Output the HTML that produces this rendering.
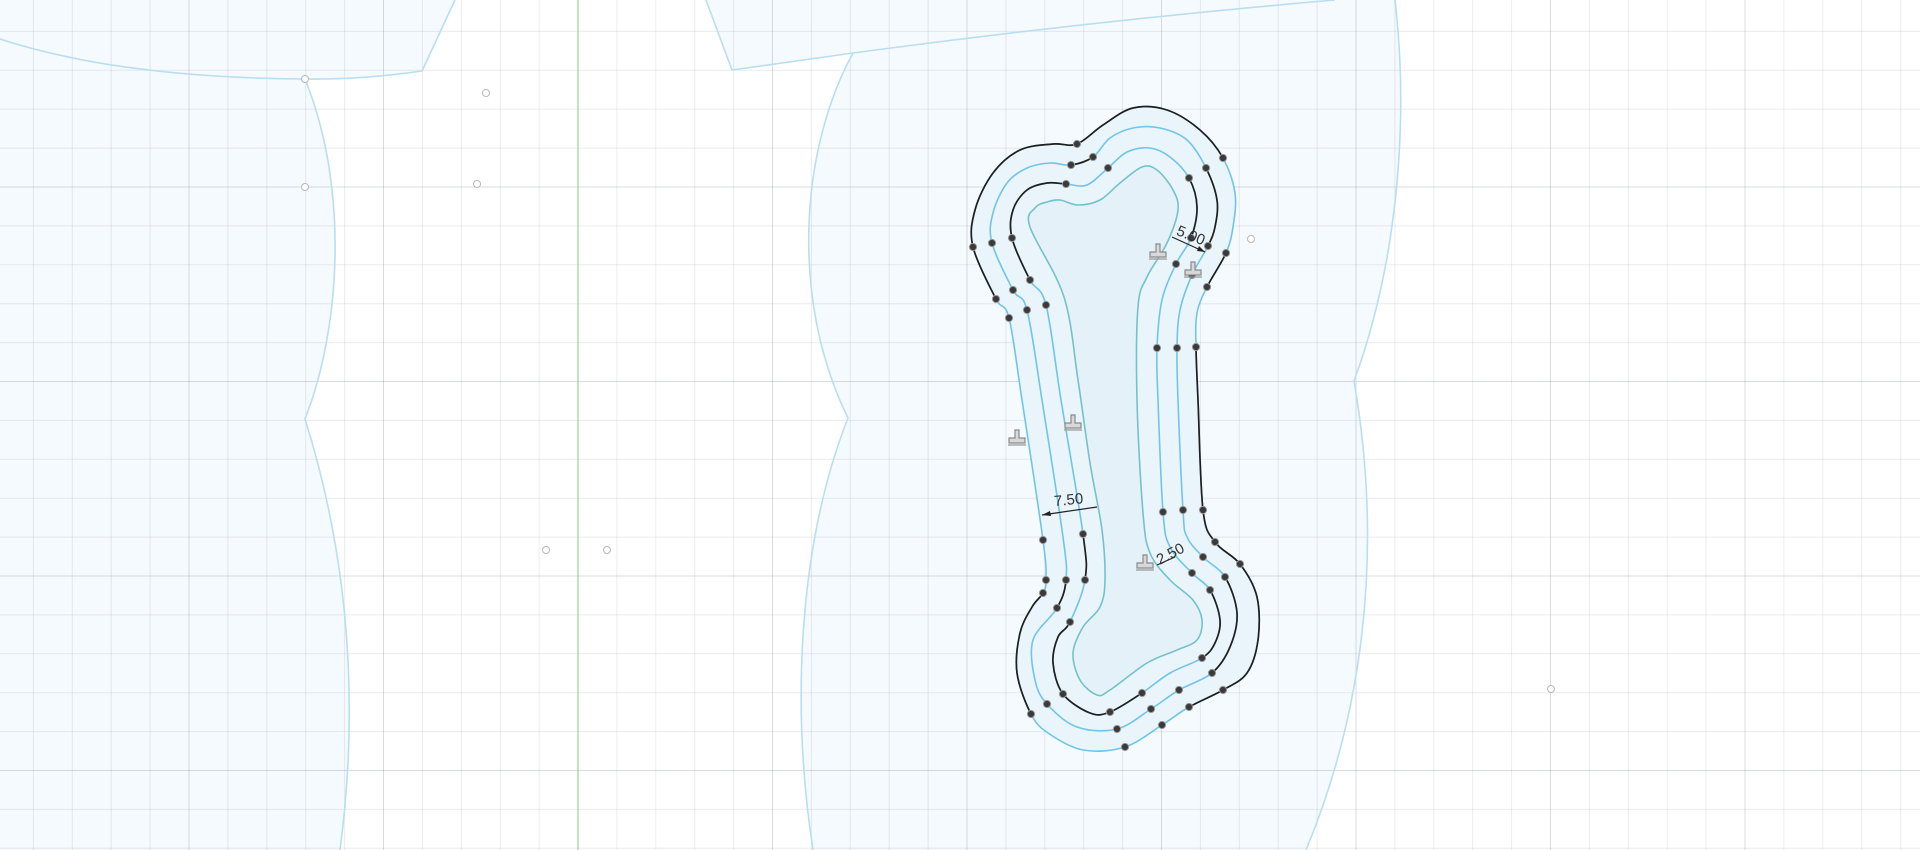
<!DOCTYPE html>
<html><head><meta charset="utf-8"><style>
html,body{margin:0;padding:0;background:#fff;width:1920px;height:850px;overflow:hidden}
svg{display:block}
text{font-family:"Liberation Sans",sans-serif}
</style></head><body>
<svg id="s" width="1920" height="850" viewBox="0 0 1920 850" xmlns="http://www.w3.org/2000/svg">
<g id="fills">
<path d="M0,0 L455,0 L422,71 Q360,80 305,79 Q120,78 0,39 Z" fill="#f5fafe"/>
<path d="M0,39 L0,850 L340,850 C352,760 362,600 305,419 C340,330 350,190 305,79 Q120,78 0,39 Z" fill="#f5fafe"/>
<path d="M706,0 L732,70 Q790,62 853,53 C800,150 790,300 848,418 C800,540 790,700 813,850 L1306,850 C1360,720 1385,560 1354,381 C1395,270 1410,130 1395,0 Z" fill="#f5fafe"/>
</g>
<g id="grid"></g>
<line x1="578" y1="0" x2="578" y2="850" stroke="#7fd07f" stroke-width="1"/>
<g fill="none" stroke="#b9def2" stroke-width="1.6">
<path d="M0,39 Q120,78 305,79 Q360,80 422,71 L455,0"/>
<path d="M305,79 C350,190 340,330 305,419 C362,600 352,760 340,850"/>
<path d="M706,0 L732,70 Q790,62 853,53 Q1100,20 1335,0"/>
<path d="M853,53 C800,150 790,300 848,418 C800,540 790,700 813,850"/>
<path d="M1395,0 C1410,130 1395,270 1354,381 C1385,560 1360,720 1306,850"/>
</g>
<g id="bone"></g>
<g fill="#fff" stroke="#b8b8b8" stroke-width="1">
<circle cx="305" cy="79" r="3.5"/><circle cx="305" cy="187" r="3.5"/>
<circle cx="486" cy="93" r="3.5"/><circle cx="477" cy="184" r="3.5"/>
<circle cx="546" cy="550" r="3.5"/><circle cx="607" cy="550" r="3.5"/>
<circle cx="1251" cy="239" r="3.5"/><circle cx="1551" cy="689" r="3.5"/>
</g>
<g id="dims" fill="#333" font-size="15">
<line x1="1172" y1="237" x2="1205" y2="252" stroke="#222" stroke-width="1.2"/>
<path d="M1205,252 l-8,-1 l2,-5 z" fill="#222"/>
<text x="1176" y="240" transform="rotate(22 1190 236)">5.00</text>
<line x1="1042" y1="515" x2="1097" y2="507" stroke="#222" stroke-width="1.2"/>
<path d="M1042,515 l8,-4 l1,5 z" fill="#222"/>
<text x="1054" y="505" transform="rotate(-6 1066 500)">7.50</text>
<line x1="1157" y1="565" x2="1175" y2="557" stroke="#222" stroke-width="1.2"/>
<text x="1156" y="560" transform="rotate(-28 1168 555)">2.50</text>
</g>
<g id="icons"></g>
</svg>
<script>
var NS="http://www.w3.org/2000/svg";
function el(t,a,p){var e=document.createElementNS(NS,t);for(var k in a)e.setAttribute(k,a[k]);p.appendChild(e);return e;}
var g=document.getElementById('grid');
for(var k=-15;k<=35;k++){var x=578+38.9*k;if(x<0||x>1920)continue;var maj=(k%5==0);
el('line',{x1:x,y1:0,x2:x,y2:850,stroke:maj?'rgba(110,120,130,0.26)':'rgba(110,120,130,0.14)','stroke-width':1},g);}
for(var k=-5;k<=20;k++){var y=187+38.9*k;if(y<0||y>850)continue;var maj=(k%5==0);
el('line',{x1:0,y1:y,x2:1920,y2:y,stroke:maj?'rgba(110,120,130,0.26)':'rgba(110,120,130,0.14)','stroke-width':1},g);}
function seg(P,i,n){var p0=P[(i-1+n)%n],p1=P[i%n],p2=P[(i+1)%n],p3=P[(i+2)%n];
return ' C'+(p1[0]+(p2[0]-p0[0])/6).toFixed(1)+','+(p1[1]+(p2[1]-p0[1])/6).toFixed(1)+' '+(p2[0]-(p3[0]-p1[0])/6).toFixed(1)+','+(p2[1]-(p3[1]-p1[1])/6).toFixed(1)+' '+p2[0]+','+p2[1];}
function closed(P){var n=P.length,d='M'+P[0][0]+','+P[0][1];for(var i=0;i<n;i++)d+=seg(P,i,n);return d+'Z';}
function part(P,a,b){var n=P.length,d='M'+P[a][0]+','+P[a][1];for(var i=a;i<b;i++)d+=seg(P,i,n);return d;}
var T=[[1064,297],[1030,227],[1035,208],[1047,202],[1060,200],[1078,205],[1100,200],[1120,183],[1142,167],[1157,170],[1173,190],[1178,210],[1167,243],[1147,277],[1138,307],[1137,400],[1143,513],[1150,553],[1170,580],[1193,600],[1202,620],[1197,640],[1177,650],[1147,663],[1110,690],[1097,695],[1080,680],[1073,653],[1083,627],[1100,607],[1105,580],[1102,530],[1090,463],[1078,380]];
var C2=[[1046,305],[1030,280],[1012,238],[1013,210],[1027,190],[1047,183],[1066,184],[1087,185],[1108,168],[1127,152],[1150,148],[1170,157],[1189,178],[1197,207],[1191,238],[1176,264],[1162,300],[1157,348],[1158,400],[1163,512],[1170,547],[1192,573],[1210,590],[1220,620],[1215,643],[1202,658],[1170,673],[1142,693],[1110,712],[1090,713],[1063,694],[1053,663],[1058,637],[1070,622],[1085,580],[1083,534],[1061,400]];
var D2=[0,1,2,6,8,12,14,15,17,19,21,22,25,27,28,30,33,34,35];
var B2=[[1,6],[12,14],[22,25],[27,33],[34,35]];
var C3=[[1027,310],[1013,290],[992,243],[993,213],[1007,183],[1027,168],[1050,163],[1071,165],[1093,157],[1110,138],[1133,128],[1160,128],[1187,140],[1206,168],[1217,200],[1215,227],[1208,246],[1192,275],[1180,310],[1177,348],[1178,400],[1183,510],[1187,537],[1203,557],[1225,577],[1237,613],[1230,647],[1212,673],[1179,690],[1151,709],[1117,729],[1077,727],[1047,704],[1035,680],[1033,640],[1057,608],[1066,580],[1063,537],[1042,400]];
var D3=[0,1,2,7,8,13,16,17,19,21,23,24,27,28,29,30,32,35,36];
var B3=[[7,8],[13,16],[24,27],[35,36]];
var C4=[[1009,318],[996,299],[973,247],[975,210],[993,173],[1020,150],[1053,144],[1077,144],[1103,125],[1133,108],[1167,110],[1200,130],[1223,158],[1235,193],[1233,227],[1226,253],[1207,287],[1197,313],[1196,347],[1198,400],[1203,510],[1215,542],[1240,564],[1257,597],[1258,640],[1247,673],[1223,690],[1189,707],[1162,725],[1125,747],[1083,750],[1048,733],[1031,714],[1017,673],[1020,633],[1032,607],[1043,593],[1046,580],[1043,540],[1022,400]];
var D4=[0,1,2,7,12,15,16,18,20,21,22,26,27,28,29,32,36,37,38];
var B4=[[1,12],[15,16],[18,27],[32,36]];
var b=document.getElementById('bone');
el('path',{d:closed(C4),fill:'#eaf4fb'},b);
el('path',{d:closed(T),fill:'#e5f1f9'},b);
el('path',{d:closed(T),fill:'none',stroke:'#72c2cc','stroke-width':1.6},b);
[[C2,B2],[C3,B3],[C4,B4]].forEach(function(c){
 el('path',{d:closed(c[0]),fill:'none',stroke:'#6ec5e9','stroke-width':1.6},b);
 c[1].forEach(function(r){el('path',{d:part(c[0],r[0],r[1]),fill:'none',stroke:'#1f1f1f','stroke-width':1.7},b);});
});
[[C2,D2],[C3,D3],[C4,D4]].forEach(function(c){c[1].forEach(function(i){var p=c[0][i];
 if((c[0]===C2&&i==26)||(c[0]===C3&&i==37))el('circle',{cx:p[0],cy:p[1],r:3.5,fill:'#fff',stroke:'#555','stroke-width':1},b);
 else el('circle',{cx:p[0],cy:p[1],r:3.6,fill:'#3a3a3a',stroke:'#999','stroke-width':1},b);});});
var ic=document.getElementById('icons');
[[1017,438],[1073,423],[1158,252],[1193,270],[1145,563]].forEach(function(p){
 var G=el('g',{transform:'translate('+p[0]+','+p[1]+')'},ic);
 el('path',{d:'M-2,-8 h4 v8 h6 v5 h-16 v-5 h6 z',fill:'#d8d8d8',stroke:'#8a8a8a','stroke-width':1.2},G);
 el('path',{d:'M-9,7 h18',stroke:'#999','stroke-width':1.2},G);
});
</script>
</body></html>
